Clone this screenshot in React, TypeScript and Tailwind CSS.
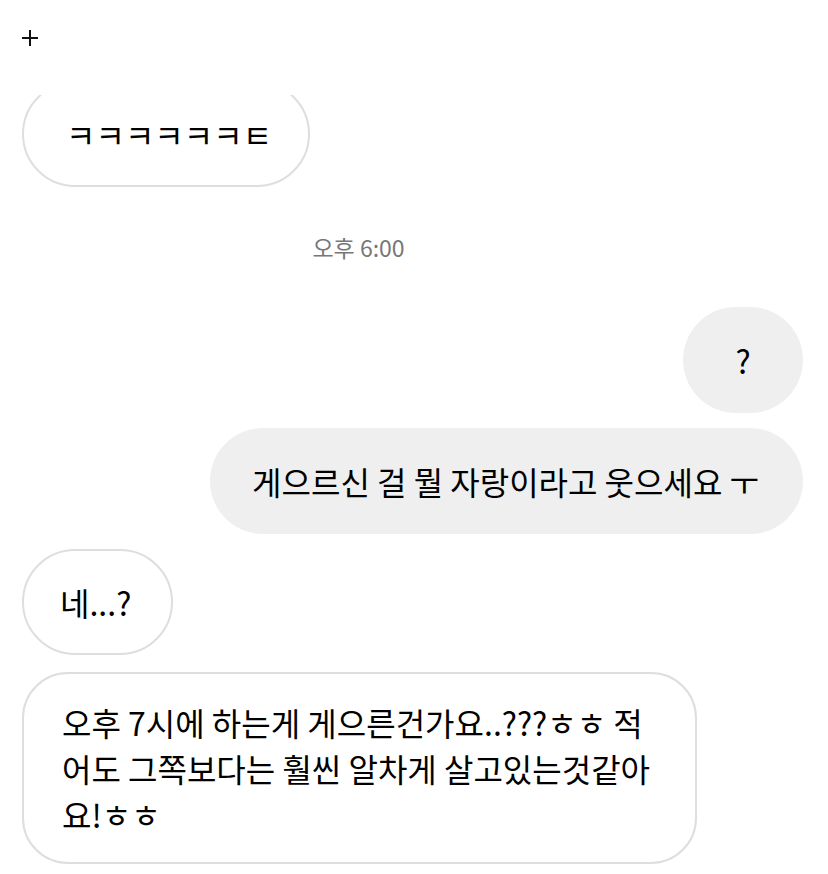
import React from "react";

const font = { fontFamily: '"Noto Sans CJK KR", "Noto Sans", sans-serif' };

export default function App() {
  return (
    <div className="w-[828px] h-[874px] bg-white overflow-hidden text-black" style={font}>
      <div className="h-[95px] pl-[22px] pt-[30px]">
        <svg width="16" height="16" viewBox="0 0 16 16" className="block">
          <path d="M8 0V16M0 8H16" stroke="#111" strokeWidth="2" />
        </svg>
      </div>
      <div className="h-[779px] overflow-hidden">
        <div className="flex flex-col pl-[22px] pr-[25px] -mt-[14px]">
          <div className="self-start rounded-full border-2 border-[#dedede] pl-[42px] pr-[36px] py-[28px] text-[32px] leading-[46px]">
            ㅋㅋㅋㅋㅋㅋㅌ
          </div>
          <div className="mt-[42px] mb-[42px] flex justify-center pr-[108px] text-[23px] leading-[36px] text-[#777]">오후 6:00</div>
          <div className="self-end min-w-[120px] rounded-full bg-[#efefef] px-[40px] py-[30px] text-center text-[32px] leading-[46px]">?</div>
          <div className="self-end mt-[15px] rounded-full bg-[#efefef] pl-[42px] pr-[44px] py-[30px] text-[32px] leading-[46px]">
            게으르신 걸 뭘 자랑이라고 웃으세요 ㅜ
          </div>
          <div className="self-start mt-[15px] rounded-full border-2 border-[#dedede] pl-[36px] pr-[40px] py-[28px] text-[32px] leading-[46px]">
            네...?
          </div>
          <div className="self-start mt-[17px] w-[675px] rounded-[46px] border-2 border-[#dedede] pl-[38px] pr-[34px] py-[25px] text-[32px] leading-[46px]">
            오후 7시에 하는게 게으른건가요..???ㅎㅎ 적어도 그쪽보다는 훨씬 알차게 살고있는것같아요!ㅎㅎ
          </div>
        </div>
      </div>
    </div>
  );
}
